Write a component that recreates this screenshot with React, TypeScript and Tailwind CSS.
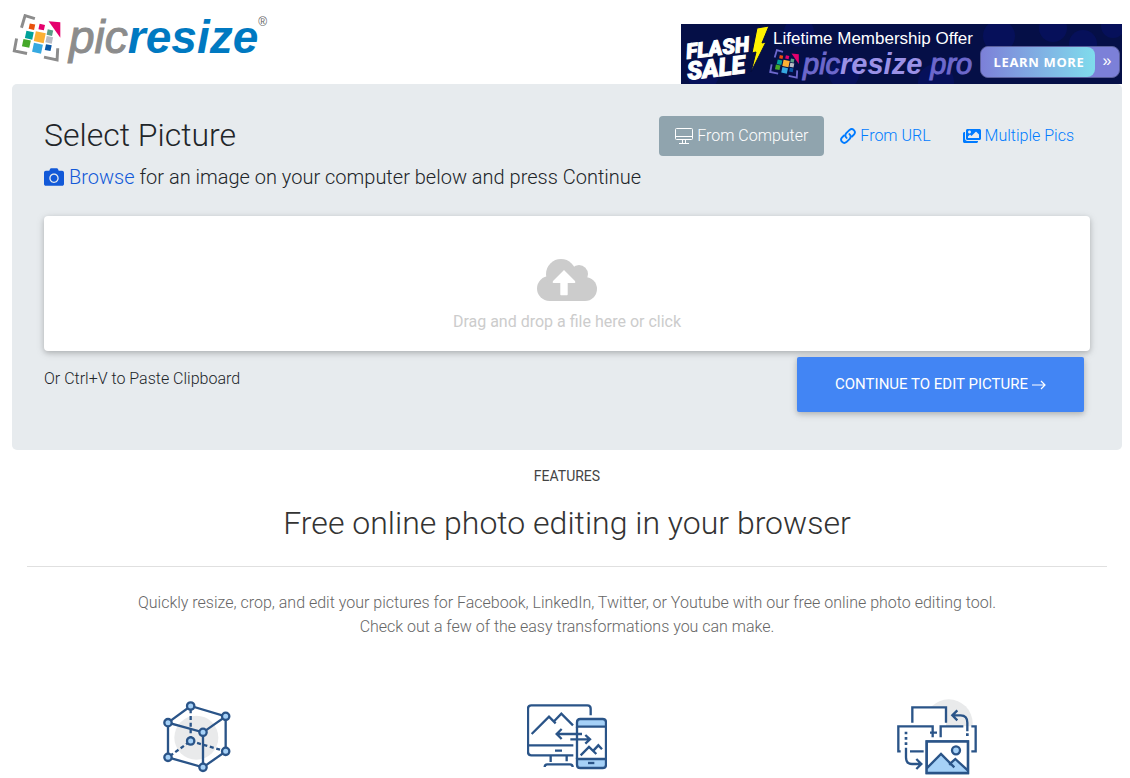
import React from 'react';
import { FaCamera, FaImages } from 'react-icons/fa';

interface Tile {
  x: number;
  y: number;
  size: number;
  color: string;
}

interface Feature {
  name: string;
  icon: React.ComponentType;
}

const tiles: Tile[] = [
  { x: 96, y: 80, size: 17, color: '#e8510c' },
  { x: 126, y: 81, size: 17, color: '#e5006d' },
  { x: 88, y: 106, size: 23, color: '#00a19a' },
  { x: 120, y: 112, size: 31, color: '#fbb034' },
  { x: 151, y: 98, size: 17, color: '#5a9e87' },
  { x: 149, y: 120, size: 20, color: '#b9bcc4' },
  { x: 79, y: 131, size: 23, color: '#45a829' },
  { x: 113, y: 146, size: 28, color: '#36a9e1' },
  { x: 146, y: 144, size: 18, color: '#0a58a6' }
];

const LogoMark = ({ className }: { className: string }) => (
  <svg className={className} viewBox="36 41 148 147" fill="none" aria-hidden="true">
    <g stroke="currentColor" strokeWidth="9">
      <path d="M64 83 L75 46 L105 55" />
      <path d="M49 116 L42 154 L81 162" />
      <path d="M133 173 L173 182 L175 146" />
    </g>
    <path d="M147 63 L183 66 L183 114 Z" fill="#e5006d" />
    {tiles.map((tile) => (
      <rect
        key={tile.color}
        x={tile.x - tile.size / 2}
        y={tile.y - tile.size / 2}
        width={tile.size}
        height={tile.size}
        fill={tile.color}
        transform={`rotate(12 ${tile.x} ${tile.y})`}
      />
    ))}
  </svg>
);

const FlashSale = () => (
  <svg className="h-[60px] w-[92px] shrink-0 overflow-visible" viewBox="0 0 92 60" aria-label="Flash Sale">
    <g fill="#fff" fontFamily="Roboto, sans-serif" fontWeight="900" fontStyle="italic" stroke="#fff" strokeWidth="1">
      <text x="6" y="35" fontSize="21" transform="rotate(-7 6 35)">FLASH</text>
      <text x="7" y="56" fontSize="25" transform="rotate(-7 7 56)">SALE</text>
    </g>
    <path d="M76 4 L88 2 L81 19 L85 18 L70 48 L75 28 L71 29 Z" fill="#fff200" stroke="#030b3d" strokeWidth="1" />
  </svg>
);

const PromoBanner = () => (
  <a href="#pro" className="relative flex h-[60px] w-[441px] bg-[#050f47] font-['Liberation_Sans',sans-serif]">
    <svg className="absolute inset-0 size-full" viewBox="0 0 441 60" fill="#08136a" fillOpacity="0.55" aria-hidden="true">
      <circle cx="22" cy="50" r="16" />
      <circle cx="118" cy="8" r="15" />
      <circle cx="163" cy="50" r="15" />
      <circle cx="255" cy="58" r="18" />
      <circle cx="318" cy="12" r="16" />
      <circle cx="372" cy="4" r="14" />
      <circle cx="402" cy="20" r="14" />
      <circle cx="432" cy="2" r="12" />
    </svg>
    <div className="relative flex">
      <FlashSale />
      <div className="flex w-[207px] flex-col whitespace-nowrap">
        <span className="pt-[5px] text-[17px] leading-5 text-white">Lifetime Membership Offer</span>
        <span className="-ml-1 flex items-center text-[29px] leading-[30px] italic [-webkit-text-stroke:1px]">
          <LogoMark className="mr-1 h-[30px] w-[30px] text-[#6d68cc]" />
          <span className="text-[#6d68cc]">pic</span>
          <span className="font-bold text-[#9b91e6] [-webkit-text-stroke:0]">resize</span>
          <span className="ml-2 text-[#6d68cc]">pro</span>
        </span>
      </div>
      <span className="mt-[22px] flex h-8 w-[140px] items-center rounded-lg border border-[#5a5f9c] bg-[#7c80d8] text-white">
        <span className="flex h-full w-[114px] items-center justify-center rounded-lg bg-linear-to-r from-[#7c80d8] to-[#7fdcec] pt-0.5 pl-0.5 font-['Noto_Sans',sans-serif] text-[13px] font-bold tracking-wider">
          LEARN MORE
        </span>
        <span className="flex-1 pb-0.5 text-center text-base leading-5">»</span>
      </span>
    </div>
  </a>
);

const DesktopIcon = () => (
  <svg className="h-4 w-[18px]" viewBox="0 0 18 16" fill="none" stroke="currentColor" aria-hidden="true">
    <rect x="0.5" y="0.5" width="17" height="11" rx="1" />
    <path d="M0.5 8.5 H17.5 M7.5 12 V15 M10.5 12 V15 M4 15.5 H14" />
  </svg>
);

const LinkIcon = () => (
  <svg className="size-4" viewBox="0 0 16 16" fill="none" stroke="currentColor" strokeWidth="1.9" strokeLinecap="round" aria-hidden="true">
    <path d="M6.600 9.900 A3.400 3.400 0 0 1 6.300 5.200 L9.600 1.900 A3.200 3.200 0 0 1 14.100 6.400 L12 8.500" />
    <path d="M9.400 6.100 A3.400 3.400 0 0 1 9.700 10.800 L6.400 14.100 A3.200 3.200 0 0 1 1.900 9.600 L4 7.500" />
  </svg>
);

const CloudUploadIcon = () => (
  <svg className="h-[42px] w-[60px]" viewBox="0 0 60 42" fill="#ccc" aria-hidden="true">
    <circle cx="12.5" cy="29.5" r="12.5" />
    <circle cx="24" cy="15" r="15" />
    <circle cx="42" cy="15" r="9" />
    <circle cx="48" cy="30" r="12" />
    <path d="M12 18 H48 V42 H12 Z" />
    <path d="M27 11 L38 22 Q39 24 37.500 24 H30.700 V35.500 Q30.700 36.300 30 36.300 H24 Q23.300 36.300 23.300 35.500 V24 H16.500 Q15 24 16 22 Z" fill="#fff" />
  </svg>
);

const CubeIcon = () => (
  <svg className="size-20" viewBox="51 21 240 240" fill="none" stroke="#2a5488" strokeWidth="7" aria-hidden="true">
    <circle cx="169" cy="143" r="66" fill="#e9eaeb" stroke="none" />
    <path d="M84 98 L152 48 L257 79 L189 127 Z M84 98 V202 L189 232 L257 184 V79 M189 127 V232" />
    <path d="M152 58 V153 L84 202 M152 153 L257 184" strokeDasharray="12 8" />
    <g fill="#a6d1f7">
      <circle cx="152" cy="48" r="11" />
      <circle cx="84" cy="98" r="11" />
      <circle cx="257" cy="79" r="11" />
      <circle cx="189" cy="127" r="11" />
      <circle cx="152" cy="153" r="11" />
      <circle cx="84" cy="202" r="11" />
      <circle cx="257" cy="184" r="11" />
      <circle cx="189" cy="232" r="11" />
    </g>
  </svg>
);

const DevicesIcon = () => (
  <svg className="size-20" viewBox="51 21 240 240" fill="none" stroke="#2a5488" strokeWidth="7" aria-hidden="true">
    <path d="M242 76 V56 Q242 46 232 46 H64 Q54 46 54 56 V186 Q54 196 64 196 H190 M54 166 H190 M135 182 H156 M122 197 V216 M170 197 V214 M104 231 Q104 223 112 223 H180 Q188 223 188 231" />
    <path d="M65 132 L117 80 L137 100 M130 96 L154 71 L189 106" />
    <path d="M201 110 V97 Q201 87 211 87 H278 Q288 87 288 97 V110 Z M201 207 H288 V224 Q288 234 278 234 H211 Q201 234 201 224 Z" fill="#a6d1f7" />
    <path d="M201 110 V207 M288 110 V207" />
    <path d="M234 219 H253" />
    <path d="M216 132 H140 M155 117 L140 132 L155 147 M181 148 H240 M226 135 L240 148 L226 161" />
    <path d="M212 196 L237 171 L259 192 M248 184 L265 166 L276 178" />
  </svg>
);

const TransformIcon = () => (
  <svg className="size-20" viewBox="51 21 240 240" fill="none" stroke="#2a5488" strokeWidth="7" aria-hidden="true">
    <circle cx="206" cy="100" r="72" fill="#e9eaeb" stroke="none" />
    <path d="M97 52 H198 V150 H97 Z M54 109 H158 V184 H54 Z M182 109 H287 V184 H182 Z" fill="#fff" stroke="none" />
    <path d="M97 98 V52 H198 V98 M158 116 V109 H55 V184 H62 M90 184 H131 M158 109 V142 M150 128 H171 M182 142 V109 H250 M274 109 H287 V184 H274" />
    <path d="M78 125 V133 M78 141 V149 M78 157 V165 M262 130 V138" strokeWidth="8" />
    <path d="M78 173 V202 Q78 222 96 222 H124 M109 207 L124 222 L109 237 M262 124 V98 Q262 76 242 76 H218 M232 61 L217 76 L232 91" />
    <path d="M140 154 H264 V249 H140 Z" fill="#fff" />
    <path d="M140 235 L183 192 L211 220 L226 207 L264 242 V249 H140 Z" fill="#a6d1f7" stroke="none" />
    <path d="M140 235 L183 192 L223 232 M207 224 L226 207 L264 242 M140 154 H264 V249 H140 Z" />
    <circle cx="228" cy="181" r="12" fill="#a6d1f7" />
  </svg>
);

const features: Feature[] = [
  { name: 'Resize', icon: CubeIcon },
  { name: 'Devices', icon: DevicesIcon },
  { name: 'Transform', icon: TransformIcon }
];

const App = () => {
  return (
    <div className="bg-white pr-2 pl-3 font-[Roboto,sans-serif] text-base font-light text-[#212529]">
      <header className="flex items-end justify-between">
        <a href="#home" className="flex items-start self-start pt-3.5 font-['Liberation_Sans',sans-serif]">
          <LogoMark className="h-12 w-[49px] text-[#8c8c8c]" />
          <span className="ml-2 text-[46px] leading-[46px] font-normal text-[#8c8c8c] italic [-webkit-text-stroke:1px]">
            pic<span className="font-bold text-[#0079c1] [-webkit-text-stroke:0]">resize</span>
          </span>
          <span className="text-xs leading-4 text-[#666]">®</span>
        </a>
        <div className="pt-6">
          <PromoBanner />
        </div>
      </header>

      <main>
        {/* Upload panel */}
        <section className="rounded-[5px] bg-[#e7ebee] p-8">
          <div className="flex items-start justify-between">
            <div>
              <h1 className="text-[32px] leading-[38px]">Select Picture</h1>
              <p className="mt-2 text-xl leading-[30px]">
                <a href="#browse" className="text-[#1259d8]">
                  <FaCamera className="mr-[5px] inline size-5 align-[-3px]" />
                  Browse
                </a>{' '}
                for an image on your computer below and press Continue
              </p>
            </div>
            <nav className="flex text-base leading-6 text-[#007bff]">
              <a href="#computer" className="flex items-center gap-1 rounded bg-[#90a4ae] px-4 py-2 text-white">
                <DesktopIcon />
                From Computer
              </a>
              <a href="#url" className="flex items-center gap-1 px-4 py-2">
                <LinkIcon />
                From URL
              </a>
              <a href="#multiple" className="flex items-center gap-1 px-4 py-2">
                <FaImages className="size-[18px]" />
                Multiple Pics
              </a>
            </nav>
          </div>

          <label className="mt-6 flex h-[135px] cursor-pointer flex-col items-center rounded bg-white pt-[43px] shadow-[0_2px_5px_rgba(0,0,0,0.16),0_2px_10px_rgba(0,0,0,0.12)]">
            <input type="file" className="sr-only" />
            <CloudUploadIcon />
            <span className="mt-[9px] leading-6 font-normal text-[#ccc]">Drag and drop a file here or click</span>
          </label>

          <div className="flex items-start justify-between">
            <p className="pt-4 leading-6">Or Ctrl+V to Paste Clipboard</p>
            <button
              type="button"
              className="m-1.5 flex h-[55px] w-[287px] items-center justify-center gap-1 rounded-xs bg-[#4285f4] text-[15px] font-normal text-white uppercase shadow-[0_2px_5px_rgba(0,0,0,0.16),0_2px_10px_rgba(0,0,0,0.12)]"
            >
              Continue to edit picture
              <svg className="h-3 w-3.5" viewBox="0 0 14 12" fill="none" stroke="currentColor" strokeWidth="1.2" aria-hidden="true">
                <path d="M0 6 H13 M9 2 L13 6 L9 10" />
              </svg>
            </button>
          </div>
        </section>

        {/* Features */}
        <section className="text-center">
          <p className="pt-4 text-sm leading-5 font-normal text-[#444]">FEATURES</p>
          <h2 className="mx-[15px] border-b border-[#e0e0e0] pt-[17px] pb-[23px] text-[32px] leading-10 text-[#333]">
            Free online photo editing in your browser
          </h2>
          <p className="pt-6 leading-6 text-[#666]">
            Quickly resize, crop, and edit your pictures for Facebook, LinkedIn, Twitter, or Youtube with our free online
            photo editing tool.
            <br />
            Check out a few of the easy transformations you can make.
          </p>
          <div className="grid grid-cols-3 pt-[58px]">
            {features.map((feature) => (
              <div key={feature.name} className="flex justify-center">
                <feature.icon />
              </div>
            ))}
          </div>
        </section>
      </main>
    </div>
  );
};

export default App;
